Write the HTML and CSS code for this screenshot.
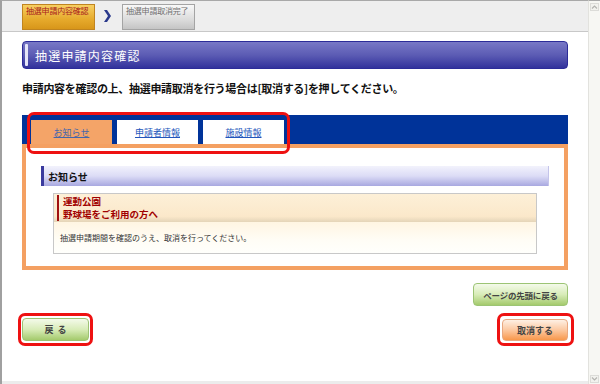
FILE: index.html
```html
<!DOCTYPE html>
<html lang="ja">
<head>
<meta charset="utf-8">
<title>抽選申請内容確認</title>
<link rel="stylesheet" href="styles.css">
</head>
<body>
<div class="window">
  <div class="main">
    <div class="steps">
      <div class="step step-current">抽選申請内容確認</div>
      <svg class="step-arrow" viewBox="0 0 7 12" width="7" height="12"><polygon points="0,0 3,0 7,6 3,12 0,12 4,6" fill="#2b3a8c"/></svg>
      <div class="step step-next">抽選申請取消完了</div>
    </div>
    <div class="content">
      <h1 class="title">抽選申請内容確認</h1>
      <p class="lead">申請内容を確認の上、抽選申請取消を行う場合は[取消する]を押してください。</p>
      <div class="tabs-wrap">
        <div class="tabbar">
          <a class="tab active" href="#">お知らせ</a>
          <a class="tab" href="#">申請者情報</a>
          <a class="tab" href="#">施設情報</a>
        </div>
        <div class="panel">
          <div class="sec-head">お知らせ</div>
          <div class="notice">
            <div class="notice-head">
              <div class="notice-title"><span class="nt-line">運動公園</span><span class="nt-line">野球場をご利用の方へ</span></div>
            </div>
            <div class="notice-body">抽選申請期間を確認のうえ、取消を行ってください。</div>
          </div>
        </div>
        <div class="hl-tabs"></div>
      </div>
      <div class="totop-row">
        <button class="btn btn-green btn-totop">ページの先頭に戻る</button>
      </div>
      <div class="actions">
        <div class="hl hl-back"><button class="btn btn-green btn-back">戻る</button></div>
        <div class="hl hl-cancel"><button class="btn btn-cancel">取消する</button></div>
      </div>
    </div>
    <div class="hstrip"></div>
  </div>
  <div class="scrollbar">
    <div class="sb-btn"><svg viewBox="0 0 7 6" width="7" height="6"><polyline points="1,4.5 3.5,2 6,4.5" fill="none" stroke="#b4b4b0" stroke-width="1.2"/></svg></div>
    <div class="sb-btn"><svg viewBox="0 0 7 6" width="7" height="6"><polyline points="1,1.5 3.5,4 6,1.5" fill="none" stroke="#b4b4b0" stroke-width="1.2"/></svg></div>
  </div>
</div>
</body>
</html>
```

FILE: styles.css
```css
html, body {
  margin: 0;
  padding: 0;
  background: #fff;
}
body {
  font-family: "Noto Sans CJK JP", "Noto Sans", sans-serif;
}
.window {
  display: flex;
  width: 600px;
  height: 384px;
  overflow: hidden;
  background: #fff;
}
.main {
  width: 588px;
  flex: none;
  box-sizing: border-box;
  border-left: 2px solid #a0a0a0;
  border-top: 1px solid #a8a8a8;
  display: flex;
  flex-direction: column;
}
.steps {
  height: 31px;
  box-sizing: border-box;
  background: #eeeeee;
  border-bottom: 1px solid #c8c8c8;
  display: flex;
  align-items: flex-start;
  padding: 3px 0 0 20px;
}
.step {
  width: 73px;
  height: 26px;
  box-sizing: border-box;
  font-size: 8px;
  line-height: 10px;
  padding: 1px 3px;
  letter-spacing: -0.2px;
}
.step-current {
  background: linear-gradient(#f7cf62, #e6aa2c 60%, #d8961a);
  border: 1px solid #c08420;
  color: #a8201c;
}
.step-next {
  background: linear-gradient(#f8f8f8, #dcdcdc 60%, #c4c4c4);
  border: 1px solid #a4a4a4;
  color: #707070;
}
.step-arrow {
  flex: none;
  margin: 6px 11px 0 9px;
}
.content {
  flex: 1;
  padding: 9px 20px 0;
  display: flex;
  flex-direction: column;
}
.title {
  margin: 0;
  height: 28px;
  box-sizing: border-box;
  border: 1px solid #2c2c98;
  border-radius: 4px;
  background: linear-gradient(#7878c6, #5c5cb4 50%, #32329c);
  display: flex;
  align-items: center;
  color: #fff;
  font-size: 12px;
  font-weight: normal;
  letter-spacing: 1.2px;
}
.title::before {
  content: "";
  width: 3px;
  align-self: stretch;
  margin: 2px 7px 2px 2px;
  background: #e6e6f8;
  border-radius: 1px;
}
.lead {
  margin: 11px 0 19px;
  font-size: 11px;
  line-height: 16px;
  letter-spacing: -0.3px;
  font-weight: bold;
  color: #111;
}
.tabs-wrap {
  position: relative;
}
.tabbar {
  height: 29px;
  box-sizing: border-box;
  background: #003399;
  padding: 5px 0 0 9px;
  display: flex;
  align-items: flex-end;
  gap: 5px;
}
.tab {
  width: 81px;
  height: 24px;
  display: flex;
  align-items: center;
  justify-content: center;
  background: #fff;
  color: #2255bb;
  font-size: 9px;
  text-decoration: underline;
}
.tab.active {
  background: #f4a468;
  color: #4466aa;
}
.panel {
  border: 4px solid #f4a062;
  background: #fff;
  padding: 18px 15px 12px;
}
.sec-head {
  height: 20px;
  box-sizing: border-box;
  border-left: 3px solid #3a3a9e;
  border-right: 1px solid #c4c4ea;
  background: linear-gradient(#f2f2fc, #dcdcf6 50%, #a8a8e0);
  padding-left: 4px;
  display: flex;
  align-items: center;
  font-size: 10px;
  font-weight: bold;
  color: #111;
}
.notice {
  margin: 7px 12px 0;
  border: 1px solid #c8c8c8;
}
.notice-head {
  display: flex;
  padding: 1px 0 1px 3px;
  background: linear-gradient(#fdf0d8, #fbe8ca 80%, #e4d4b8);
}
.notice-title {
  border-left: 2px solid #a01010;
  padding-left: 4px;
  color: #a00000;
  font-size: 9.5px;
  line-height: 13px;
  font-weight: bold;
  display: flex;
  flex-direction: column;
}
.nt-line {
  display: block;
  height: 13px;
  white-space: nowrap;
}
.notice-body {
  height: 31px;
  display: flex;
  align-items: center;
  padding-left: 6px;
  font-size: 8px;
  color: #333;
  background: linear-gradient(#fff5e2, #fffdf6 60%, #fffffc);
}
.hl-tabs {
  position: absolute;
  left: 5px;
  top: -3px;
  width: 263px;
  height: 42px;
  box-sizing: border-box;
  border: 3px solid #ee1111;
  border-radius: 7px;
}
.totop-row {
  display: flex;
  justify-content: flex-end;
  margin-top: 13px;
}
.btn {
  font-family: inherit;
  font-weight: bold;
  color: #444;
  border-radius: 4px;
  box-sizing: border-box;
  padding: 0;
  display: flex;
  align-items: center;
  justify-content: center;
  cursor: pointer;
}
.btn-green {
  background: linear-gradient(#f4faea, #d8ecb8 50%, #a4ca6c);
  border: 1px solid #9cc474;
}
.btn-totop {
  width: 95px;
  height: 23px;
  font-size: 8.5px;
  letter-spacing: -0.2px;
}
.actions {
  display: flex;
  justify-content: space-between;
  margin: 7px -6px 0 -4px;
}
.hl {
  border: 3px solid #ee1111;
  border-radius: 7px;
}
.hl-back {
  padding: 2px 1px 0 1px;
}
.hl-cancel {
  padding: 3px 3px 2px 2px;
}
.btn-back {
  width: 67px;
  height: 23px;
  font-size: 9px;
  letter-spacing: 4px;
  padding-left: 4px;
}
.btn-cancel {
  width: 66px;
  height: 22px;
  font-size: 9px;
  background: linear-gradient(#fef0e4, #fcc8a0 50%, #f8984c);
  border: 1px solid #e8a880;
}
.hstrip {
  height: 3px;
  background: #ececec;
}
.scrollbar {
  width: 12px;
  flex: none;
  box-sizing: border-box;
  border-top: 1px solid #a8a8a8;
  border-left: 1px solid #e2e2de;
  background: #f7f7f3;
  display: flex;
  flex-direction: column;
  justify-content: space-between;
  align-items: center;
  padding: 2px 0 1px;
}
.sb-btn {
  width: 9px;
  height: 8px;
  box-sizing: border-box;
  border: 1px solid #dcdcd8;
  background: #f2f2ee;
  display: flex;
  align-items: center;
  justify-content: center;
}
```
